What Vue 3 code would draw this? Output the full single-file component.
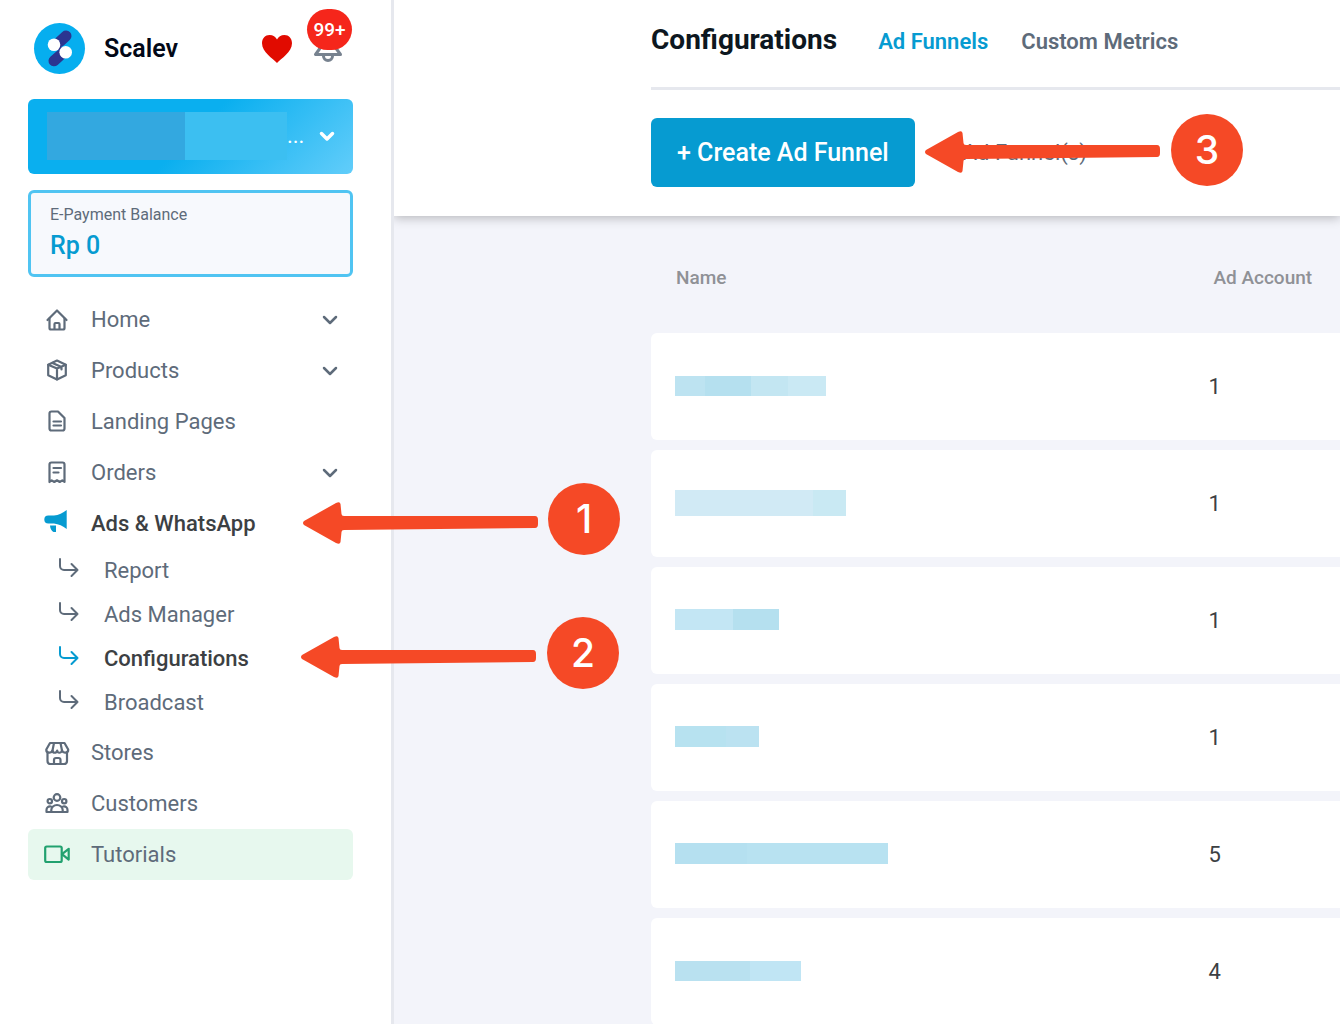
<script setup>
const nav = [
  { label: 'Home', icon: 'home', expandable: true },
  { label: 'Products', icon: 'box', expandable: true },
  { label: 'Landing Pages', icon: 'page' },
  { label: 'Orders', icon: 'receipt', expandable: true },
  {
    label: 'Ads & WhatsApp',
    icon: 'megaphone',
    active: true,
    children: [
      { label: 'Report' },
      { label: 'Ads Manager' },
      { label: 'Configurations', active: true },
      { label: 'Broadcast' },
    ],
  },
  { label: 'Stores', icon: 'store' },
  { label: 'Customers', icon: 'people' },
  { label: 'Tutorials', icon: 'video', highlight: true },
]

const funnels = [
  { accounts: 1, height: 20, parts: [[30, '#bde3f1'], [46, '#b5e0ef'], [37, '#c3e6f2'], [38, '#cae9f4']] },
  { accounts: 1, height: 26, parts: [[138, '#d1eaf5'], [33, '#c9e9f3']] },
  { accounts: 1, height: 21, parts: [[58, '#c3e6f4'], [46, '#b5e0ef']] },
  { accounts: 1, height: 21, parts: [[51, '#b7e2f0'], [33, '#bbe2f1']] },
  { accounts: 5, height: 21, parts: [[72, '#b5e0f0'], [141, '#b8e2f1']] },
  { accounts: 4, height: 20, parts: [[75, '#b9e1f0'], [51, '#c0e5f4']] },
]

const steps = [
  { n: 1, arrow: [302, 501], badge: [548, 483] },
  { n: 2, arrow: [300, 635], badge: [547, 617] },
  { n: 3, arrow: [924, 130], badge: [1171, 114] },
]

const at = ([x, y]) => ({ left: x + 'px', top: y + 'px' })
</script>

<template>
  <div class="shell">
    <aside class="sidebar">
      <div class="brand">
        <svg class="logo" viewBox="0 0 51 51" aria-hidden="true">
          <circle cx="25.5" cy="25.5" r="25.5" fill="#06aeef" />
          <g stroke="#2b3590" stroke-linecap="round">
            <path d="M26 18.500L32 13M26 32.500L20 37.800" stroke-width="11" />
            <path d="M20 21.700L32 29.500" stroke-width="5" />
          </g>
          <circle cx="20" cy="21.800" r="6.300" fill="#fff" />
          <circle cx="31.700" cy="29.200" r="6.300" fill="#fff" />
        </svg>
        <span class="brand-name">Scalev</span>
        <button class="plain" aria-label="Favourites">
          <svg width="30" height="28" viewBox="0 0 30 28">
            <path d="M15 28C11 23.500 0 17 0 8.200C0 3.300 3.300 0 7.500 0C11 0 13.800 1.800 15 4.500C16.200 1.800 19 0 22.500 0C26.700 0 30 3.300 30 8.200C30 17 19 23.500 15 28z" fill="#e10b00" />
          </svg>
        </button>
        <button class="plain bell" aria-label="Notifications">
          <svg width="30" height="30" viewBox="0 0 30 30" fill="none" stroke="#77828f" stroke-width="3" stroke-linejoin="round" stroke-linecap="round">
            <path d="M15 3C9.500 3 6.500 7 6.500 12V15L2.500 20.500H27.500L23.500 15V12C23.500 7 20.500 3 15 3z" />
            <path d="M10.500 22a4.500 4.500 0 0 0 9 0" />
          </svg>
          <span class="count">99+</span>
        </button>
      </div>

      <button class="workspace" aria-label="Switch business">
        <span class="ws-dark"></span><span class="ws-light"></span>
        <span class="dots">...</span>
        <svg width="16" height="12" viewBox="0 0 16 12" fill="none" stroke="#fff" stroke-width="3.500" stroke-linecap="round" stroke-linejoin="round">
          <path d="M2.500 3.500L8 9L13.500 3.500" />
        </svg>
      </button>

      <section class="balance">
        <span class="balance-label">E-Payment Balance</span>
        <strong class="balance-value">Rp 0</strong>
      </section>

      <nav>
        <ul class="menu">
          <li v-for="item in nav" :key="item.label">
            <a href="#" class="item" :class="{ active: item.active, highlight: item.highlight }">
              <svg class="icon" viewBox="0 0 26 26" fill="none" stroke="currentColor" stroke-width="2.200" stroke-linecap="round" stroke-linejoin="round" aria-hidden="true">
                <template v-if="item.icon === 'home'">
                  <path d="M3.500 13L13 3.500L22.500 13" />
                  <path d="M5.500 11.500V21A1.500 1.500 0 0 0 7 22.500H19A1.500 1.500 0 0 0 20.500 21V11.500" />
                  <path d="M10.500 22V17A1 1 0 0 1 11.500 16H14.500A1 1 0 0 1 15.500 17V22" />
                </template>
                <template v-else-if="item.icon === 'box'">
                  <path d="M13 2.500L21.800 6.800V17.200L13 21.500L4.200 17.200V6.800z" />
                  <path d="M4.200 6.800L13 10.500L21.800 6.800M13 10.500V21.500M8.500 5L17.500 9V11.500" />
                </template>
                <template v-else-if="item.icon === 'page'">
                  <path d="M7.500 2.500H14L20.500 9V19.500A2 2 0 0 1 18.500 21.500H7.500A2 2 0 0 1 5.500 19.500V4.500A2 2 0 0 1 7.500 2.500" />
                  <path d="M9.500 12.500H17M9.500 16.500H17" />
                </template>
                <template v-else-if="item.icon === 'receipt'">
                  <path d="M5.500 22V4.500A2 2 0 0 1 7.500 2.500H18.500A2 2 0 0 1 20.500 4.500V22L18.300 20.300L15.700 22L13 20.300L10.300 22L7.700 20.300z" />
                  <path d="M9.500 8H17M9.500 12.500H14.500" />
                </template>
                <path v-else-if="item.icon === 'megaphone'" fill="currentColor" stroke="none" d="M4.300 4.500H10C14.500 4.200 19 2 22.700 -1V18C19 15 14.500 13 10 12.500H4.300A4 4 0 0 1 4.300 4.500zM6 14.500H12V21H9.500C7.500 20 6.200 17.500 6 14.500z" />
                <template v-else-if="item.icon === 'store'">
                  <path d="M3.500 13V21A3 3 0 0 0 6.500 24H20A3 3 0 0 0 23 21V13" />
                  <path d="M6 3H20.500L24.200 9.500C24.500 13 19.500 14 18 10.500C17 13.500 13.500 13.500 13.200 10.500C12.500 13.500 9 13.500 8.500 10.500C7 14 2 13 2.300 9.500z" />
                  <path d="M10 3L8.500 10.500M16.500 3L18 10.500M10 23.500V20A2 2 0 0 1 12 18H14.500A2 2 0 0 1 16.500 20V23.500" />
                </template>
                <template v-else-if="item.icon === 'people'">
                  <circle cx="13" cy="6.500" r="3.300" />
                  <circle cx="5.800" cy="10.200" r="2.200" />
                  <circle cx="20.200" cy="10.200" r="2.200" />
                  <path d="M7.300 21V19A5.700 5 0 0 1 18.700 19V21z" />
                  <path d="M7 15.500C4 15 2.500 16.800 2.500 19V21H7.500M19 15.500C22 15 23.500 16.800 23.500 19V21H18.500" />
                </template>
                <template v-else>
                  <rect x="1.200" y="4.500" width="16.500" height="15.500" rx="1.500" />
                  <path d="M18 12.200L24.700 6.800V17.600z" />
                </template>
              </svg>
              <span class="label">{{ item.label }}</span>
              <svg v-if="item.expandable" class="chevron" width="16" height="10" viewBox="0 0 16 10" fill="none" stroke="currentColor" stroke-width="2.500" stroke-linecap="round" stroke-linejoin="round">
                <path d="M2 2L8 8L14 2" />
              </svg>
            </a>
            <ul v-if="item.children" class="submenu">
              <li v-for="child in item.children" :key="child.label">
                <a href="#" class="subitem" :class="{ active: child.active }">
                  <svg class="elbow" width="20" height="24" viewBox="0 0 20 24" fill="none" stroke="currentColor" stroke-width="2" stroke-linecap="round" stroke-linejoin="round" aria-hidden="true">
                    <path d="M1 1V8A4 4 0 0 0 5 12H18.500M12.500 6L18.500 12L12.500 18" />
                  </svg>
                  <span>{{ child.label }}</span>
                </a>
              </li>
            </ul>
          </li>
        </ul>
      </nav>
    </aside>

    <main class="main">
      <header class="top">
        <div class="tabs">
          <h1>Configurations</h1>
          <a href="#" class="tab current">Ad Funnels</a>
          <a href="#" class="tab">Custom Metrics</a>
        </div>
        <div class="actions">
          <button class="create">+ Create Ad Funnel</button>
          <span class="total">Ad Funnel(s)</span>
        </div>
      </header>

      <table class="funnels">
        <thead>
          <tr><th class="name">Name</th><th>Ad Account</th></tr>
        </thead>
        <tbody>
          <tr v-for="(f, i) in funnels" :key="i">
            <td>
              <div class="mask">
                <span v-for="(p, j) in f.parts" :key="j" :style="{ width: p[0] + 'px', height: f.height + 'px', background: p[1] }"></span>
              </div>
            </td>
            <td class="num">{{ f.accounts }}</td>
          </tr>
        </tbody>
      </table>
    </main>

    <template v-for="s in steps" :key="s.n">
      <svg class="arrow" :style="at(s.arrow)" width="237" height="44" viewBox="0 0 237 44" aria-hidden="true">
        <path d="M2 20L34 2Q38 0 38.500 3L39.500 13Q39.500 15 42 15H233Q236 15 236 19V23Q236 27 233 27L42 29Q39.500 29 39.500 31L38.500 41Q38 44 34 42L2 24Q0 22 2 20z" fill="#f54926" />
      </svg>
      <span class="step" :style="at(s.badge)">{{ s.n }}</span>
    </template>
  </div>
</template>

<style>
body {
  margin: 0;
}
</style>

<style scoped>
.shell {
  position: relative;
  display: flex;
  height: 100vh;
  overflow: hidden;
  background: #f3f4fa;
  color: #5e6b7a;
  font-family: Roboto, 'Liberation Sans', sans-serif;
  font-size: 22px;
}
.shell * {
  box-sizing: border-box;
}
button {
  font: inherit;
  border: 0;
  cursor: pointer;
}
a {
  color: inherit;
  text-decoration: none;
}
ul {
  list-style: none;
  margin: 0;
  padding: 0;
}
svg {
  display: block;
  flex: none;
  overflow: visible;
}

.sidebar {
  flex: none;
  width: 394px;
  padding: 23px 38px 0 28px;
  background: #fff;
  border-right: 3px solid #e6e8ee;
}
.brand {
  display: flex;
  align-items: center;
  height: 51px;
  margin-bottom: 25px;
  padding: 0 10px 0 6px;
}
.logo {
  width: 51px;
  height: 51px;
}
.brand-name {
  flex: 1;
  margin-left: 19px;
  color: #020817;
  font-size: 25px;
  font-weight: 600;
}
.plain {
  padding: 0;
  background: none;
}
.bell {
  position: relative;
  margin-left: 21px;
}
.count {
  position: absolute;
  right: -9px;
  bottom: 14px;
  width: 45px;
  height: 41px;
  border-radius: 21px;
  background: #f5261b;
  color: #fff;
  font-size: 19px;
  font-weight: 500;
  line-height: 41px;
}

.workspace {
  display: flex;
  align-items: center;
  width: 100%;
  height: 75px;
  padding: 0 18px 2px 19px;
  border-radius: 6px;
  background: linear-gradient(135deg, #0aafef 50%, #62cdfa);
  color: #fff;
}
.workspace svg {
  margin-left: auto;
}
.ws-dark {
  width: 138px;
  height: 48px;
  background: #33a8e0;
}
.ws-light {
  width: 102px;
  height: 48px;
  background: #3cbff1;
}

.balance {
  display: flex;
  flex-direction: column;
  height: 87px;
  margin: 16px 0 17px;
  padding: 12px 19px;
  border: 3px solid #50c4f2;
  border-radius: 6px;
  background: #f7f9fd;
}
.balance-label {
  font-size: 16px;
  line-height: 20px;
}
.balance-value {
  color: #069bd1;
  font-size: 25px;
  font-weight: 500;
  line-height: 42px;
}

.item {
  display: flex;
  align-items: center;
  height: 51px;
  padding: 0 15px 0 16px;
  border-radius: 6px;
}
.icon {
  width: 26px;
  height: 26px;
  margin-right: 21px;
}
.label {
  flex: 1;
}
.item.active,
.subitem.active {
  color: #3c4043;
  font-weight: 500;
}
.item.active .icon,
.subitem.active .elbow {
  color: #069bd1;
}
.item.highlight {
  background: #e7f8ee;
}
.item.highlight .icon {
  color: #22a16f;
}
.submenu {
  padding-bottom: 2px;
}
.subitem {
  display: flex;
  align-items: center;
  gap: 25px;
  height: 44px;
  padding: 0 0 2px 31px;
}

.main {
  flex: 1;
  min-width: 0;
}
.top {
  height: 216px;
  padding-left: 257px;
  background: #fff;
  box-shadow: 0 2px 10px rgba(0, 0, 0, 0.25);
  clip-path: inset(0 0 -20px 0);
}
.tabs {
  display: flex;
  align-items: baseline;
  height: 90px;
  padding-top: 23px;
  border-bottom: 3px solid #e6e8ee;
  white-space: nowrap;
}
h1 {
  margin: 0 8px 0 0;
  color: #0d1720;
  font-size: 28px;
  font-weight: 700;
}
.tab {
  margin-left: 33px;
  font-weight: 600;
}
.tab.current {
  color: #069bd1;
}
.actions {
  display: flex;
  align-items: center;
  gap: 48px;
  margin-top: 28px;
  white-space: nowrap;
}
.create {
  height: 69px;
  padding: 0 26px;
  border-radius: 6px;
  background: #069bd1;
  color: #fff;
  font-size: 25px;
  font-weight: 500;
}

.funnels {
  width: calc(100% - 257px);
  margin-left: 257px;
  border-spacing: 0 10px;
  table-layout: fixed;
}
th {
  height: 97px;
  padding: 5px 0 0 25px;
  color: #8f9196;
  font-size: 19px;
  font-weight: 500;
  text-align: left;
}
.name {
  width: 78%;
}
td {
  height: 107px;
  padding: 0 0 0 24px;
  background: #fff;
}
td:first-child {
  padding-bottom: 2px;
  border-radius: 6px 0 0 6px;
}
td.num {
  padding-left: 20px;
  color: #3c4043;
}
.mask {
  display: flex;
}

.arrow,
.step {
  position: absolute;
}
.step {
  width: 72px;
  height: 72px;
  border-radius: 50%;
  background: #f54926;
  color: #fff;
  font-family: Inter, 'Liberation Sans', sans-serif;
  font-size: 39px;
  font-weight: 500;
  line-height: 72px;
  text-align: center;
}
</style>
